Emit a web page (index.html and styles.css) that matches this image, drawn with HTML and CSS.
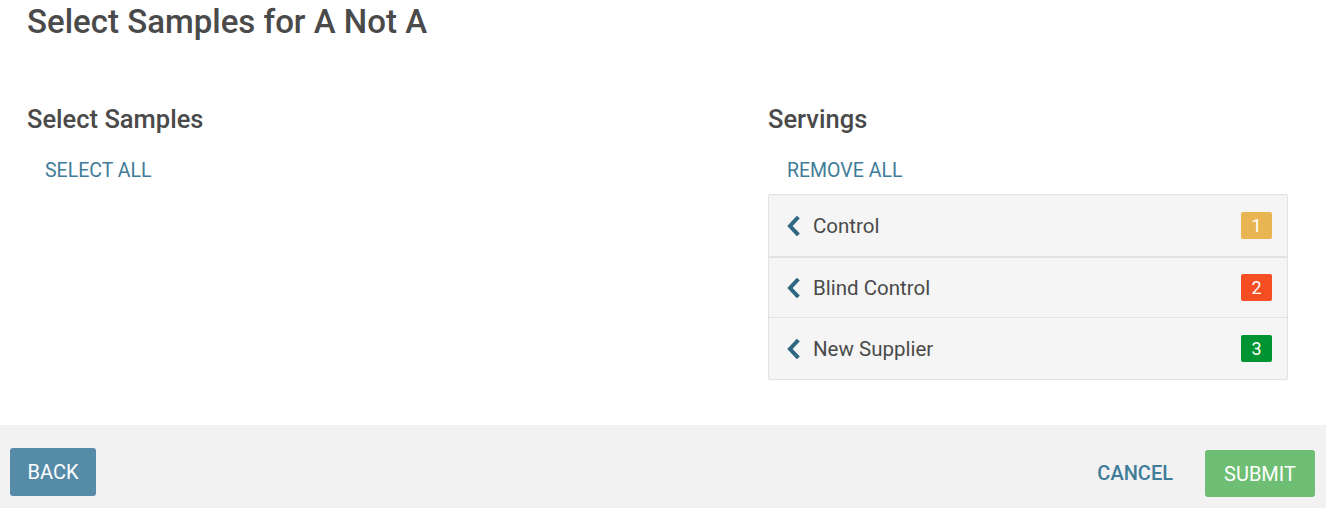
FILE: index.html
```html
<!DOCTYPE html>
<html>
<head>
<meta charset="utf-8">
<link rel="stylesheet" href="styles.css">
</head>
<body>
<div class="page">
  <h1 class="title">Select Samples for A Not A</h1>
  <div class="columns">
    <section class="col col-left">
      <h2 class="section-title">Select Samples</h2>
      <button class="link-btn">SELECT ALL</button>
    </section>
    <section class="col col-right">
      <h2 class="section-title">Servings</h2>
      <button class="link-btn">REMOVE ALL</button>
      <ul class="servings">
        <li class="serving">
          <svg class="chev" width="14" height="20" viewBox="0 0 14 20"><polyline points="11,2.5 4,10 11,17.5" fill="none" stroke="#2f6782" stroke-width="4" stroke-linecap="square" stroke-linejoin="miter"/></svg>
          <span class="name">Control</span>
          <span class="badge badge-yellow">1</span>
        </li>
        <li class="serving">
          <svg class="chev" width="14" height="20" viewBox="0 0 14 20"><polyline points="11,2.5 4,10 11,17.5" fill="none" stroke="#2f6782" stroke-width="4" stroke-linecap="square" stroke-linejoin="miter"/></svg>
          <span class="name">Blind Control</span>
          <span class="badge badge-red">2</span>
        </li>
        <li class="serving">
          <svg class="chev" width="14" height="20" viewBox="0 0 14 20"><polyline points="11,2.5 4,10 11,17.5" fill="none" stroke="#2f6782" stroke-width="4" stroke-linecap="square" stroke-linejoin="miter"/></svg>
          <span class="name">New Supplier</span>
          <span class="badge badge-green">3</span>
        </li>
      </ul>
    </section>
  </div>
</div>
<footer class="footer">
  <button class="btn btn-back">BACK</button>
  <div class="footer-right">
    <button class="btn btn-cancel">CANCEL</button>
    <button class="btn btn-submit">SUBMIT</button>
  </div>
</footer>
</body>
</html>
```
FILE: styles.css
```css
html, body {
  margin: 0;
  padding: 0;
  background: #ffffff;
  font-family: Roboto, "Liberation Sans", sans-serif;
  color: #4a4a4a;
}
.page {
  height: 425px;
  box-sizing: border-box;
  padding: 0 0 0 27px;
}
.title {
  margin: 0;
  padding-top: 1px;
  font-size: 33px;
  font-weight: 500;
  line-height: 42px;
  color: #4a4a4a;
}
.columns {
  display: flex;
  margin-top: 60px;
}
.col-left {
  flex: 0 0 741px;
}
.col-right {
  flex: 0 0 520px;
}
.section-title {
  margin: 0;
  font-size: 25.5px;
  font-weight: 500;
  line-height: 32px;
  color: #4a4a4a;
}
.link-btn {
  display: block;
  margin: 25px 0 0 18px;
  padding: 0;
  border: none;
  background: none;
  font-family: Roboto, "Liberation Sans", sans-serif;
  font-size: 19.5px;
  line-height: 22px;
  color: #3f7c98;
  cursor: pointer;
}
.col-right .link-btn {
  margin-left: 19px;
}
.servings {
  list-style: none;
  margin: 12px 0 0 0;
  padding: 0;
  border: 1px solid #e2e2e2;
  border-radius: 2px;
  background: #f5f5f5;
}
.serving {
  display: flex;
  align-items: center;
  height: 61px;
  padding: 0 15px 0 17px;
  border-top: 1px solid #e2e2e2;
}
.serving:first-child {
  border-top: none;
  height: 61px;
}
.serving:nth-child(2) {
  border-top: 2px solid #e2e2e2;
  height: 59px;
}
.chev {
  flex: 0 0 auto;
  margin-right: 13px;
}
.name {
  flex: 1;
  font-size: 20.5px;
  color: #4a4a4a;
}
.badge {
  width: 31px;
  height: 27px;
  border-radius: 2px;
  color: #ffffff;
  font-size: 18px;
  line-height: 27px;
  text-align: center;
}
.badge-yellow { background: #e9b553; }
.badge-red { background: #f44e22; }
.badge-green { background: #009432; }
.footer {
  display: flex;
  align-items: flex-start;
  justify-content: space-between;
  height: 83px;
  box-sizing: border-box;
  padding: 23px 11px 0 10px;
  background: #f2f2f2;
}
.footer-right {
  display: flex;
  align-items: center;
}
.btn {
  border: none;
  border-radius: 3px;
  font-family: Roboto, "Liberation Sans", sans-serif;
  font-size: 20px;
  line-height: 22px;
  cursor: pointer;
}
.btn-back {
  width: 86px;
  height: 48px;
  background: #558ba7;
  color: #ffffff;
}
.btn-cancel {
  background: none;
  color: #3f7c98;
  font-weight: 500;
  padding: 0;
  margin-right: 32px;
  height: 50px;
}
.btn-submit {
  width: 110px;
  height: 47px;
  margin-top: 1px;
  background: #6ebe73;
  color: #ffffff;
}
```
